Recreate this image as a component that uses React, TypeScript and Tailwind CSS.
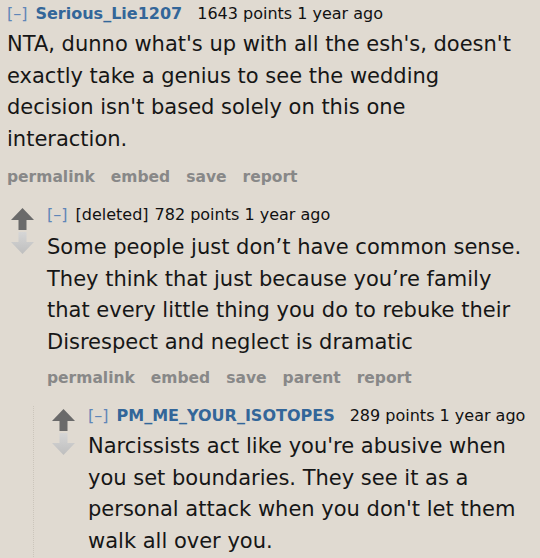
import React, {useId} from 'react';

type Comment = {
  author: string;
  deleted?: boolean;
  points: number;
  age: string;
  lines: string[];
  buttons: string[];
};

const FONT = "font-['DejaVu_Sans',Verdana,sans-serif]";

const ARROW_PATH = 'M11.5 0 L23 12 L15.5 12 L15.5 22 L7.5 22 L7.5 12 L0 12 Z';

function UpArrow() {
  return (
    <svg width="23" height="22" viewBox="0 0 23 22">
      <path d={ARROW_PATH} fill="#6a6a6a" />
    </svg>
  );
}

// the downvote arrow fades out towards the stem
function DownArrow() {
  const id = useId();
  return (
    <svg width="23" height="22" viewBox="0 0 23 22" className="rotate-180">
      <defs>
        <linearGradient id={id} x1="0" y1="0" x2="0" y2="1">
          <stop offset="0" stopColor="#bebebe" />
          <stop offset="1" stopColor="#d6d6d6" />
        </linearGradient>
      </defs>
      <path d={ARROW_PATH} fill={`url(#${id})`} />
    </svg>
  );
}

function Voter() {
  return (
    <div className="flex flex-col gap-[2px] w-[23px] mr-[13px] mt-[3px]">
      <UpArrow />
      <DownArrow />
    </div>
  );
}

function Tagline({c}: {c: Comment}) {
  return (
    <div className="flex items-baseline whitespace-nowrap text-[16px] leading-[20px] text-[#111]">
      <span className="text-[#5f86b8] mr-[8px]">[–]</span>
      {c.deleted ? (
        <span className="mr-[6px]">[deleted]</span>
      ) : (
        <span className="font-bold text-[#336699] mr-[15px]">{c.author}</span>
      )}
      <span>{c.points} points {c.age}</span>
    </div>
  );
}

function Body({lines, className}: {lines: string[]; className: string}) {
  return (
    <div className={`text-[21px] leading-[31.5px] text-[#161616] whitespace-nowrap ${className}`}>
      {lines.map((l) => (
        <p key={l}>{l}</p>
      ))}
    </div>
  );
}

function Buttons({items, className}: {items: string[]; className: string}) {
  return (
    <div className={`flex gap-[16px] text-[15.5px] font-bold text-[#888] leading-[20px] ${className}`}>
      {items.map((b) => (
        <span key={b}>{b}</span>
      ))}
    </div>
  );
}

const first: Comment = {
  author: 'Serious_Lie1207',
  points: 1643,
  age: '1 year ago',
  lines: [
    "NTA, dunno what's up with all the esh's, doesn't",
    'exactly take a genius to see the wedding',
    "decision isn't based solely on this one",
    'interaction.',
  ],
  buttons: ['permalink', 'embed', 'save', 'report'],
};

const second: Comment = {
  author: '[deleted]',
  deleted: true,
  points: 782,
  age: '1 year ago',
  lines: [
    'Some people just don’t have common sense.',
    'They think that just because you’re family',
    'that every little thing you do to rebuke their',
    'Disrespect and neglect is dramatic',
  ],
  buttons: ['permalink', 'embed', 'save', 'parent', 'report'],
};

const third: Comment = {
  author: 'PM_ME_YOUR_ISOTOPES',
  points: 289,
  age: '1 year ago',
  lines: [
    "Narcissists act like you're abusive when",
    'you set boundaries. They see it as a',
    "personal attack when you don't let them",
    'walk all over you.',
  ],
  buttons: [],
};

export default function App() {
  return (
    <div className={`w-[540px] h-[558px] overflow-hidden bg-[#e0dad1] ${FONT}`}>
      {/* top comment, its arrows are scrolled off */}
      <div className="pl-[7px] pt-[4px]">
        <Tagline c={first} />
        <Body lines={first.lines} className="mt-[5px]" />
        <Buttons items={first.buttons} className="mt-[12px]" />
      </div>

      {/* child */}
      <div className="flex pl-[11px] mt-[18px]">
        <Voter />
        <div className="flex-1">
          <Tagline c={second} />
          <Body lines={second.lines} className="mt-[7px]" />
          <Buttons items={second.buttons} className="mt-[10px]" />

          {/* grandchild */}
          <div className="flex mt-[18px] -ml-[14px] border-l border-dotted border-[#cbc5bb] pl-[18px] pb-[20px]">
            <Voter />
            <div className="flex-1">
              <Tagline c={third} />
              <Body lines={third.lines} className="mt-[5px]" />
            </div>
          </div>
        </div>
      </div>
    </div>
  );
}
